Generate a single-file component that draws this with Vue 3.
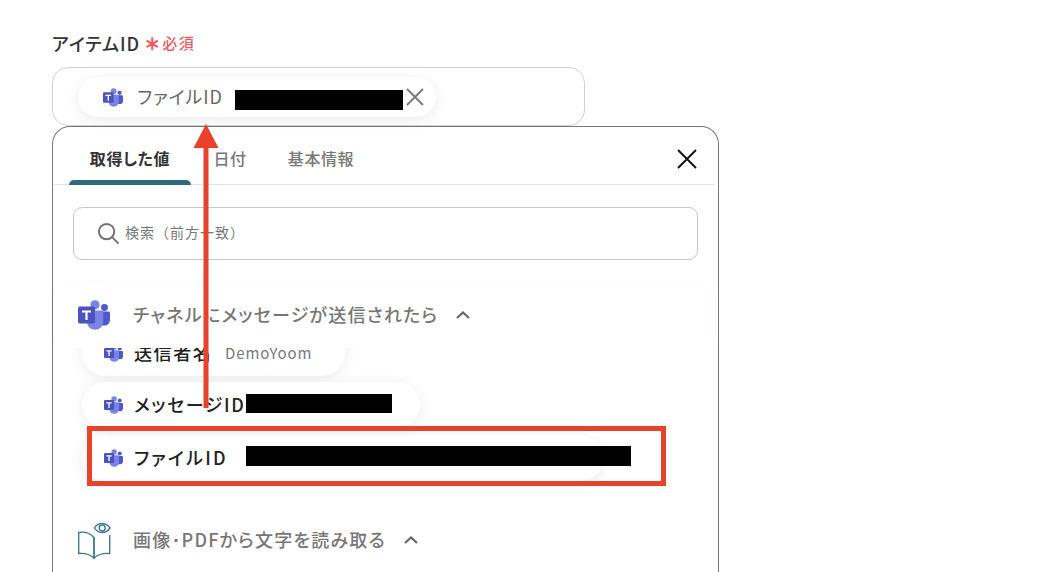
<script setup>
const tabs = [
  { label: '取得した値', active: true },
  { label: '日付', active: false },
  { label: '基本情報', active: false },
]
</script>

<template>
  <div class="page">
    <div class="label">
      <span>アイテムID</span>
      <span class="star">＊</span>
      <span class="req">必須</span>
    </div>

    <div class="field">
      <div class="chip chip-field">
        <svg class="teams teams-field" viewBox="0 0 32 30"><use href="#teams-logo" /></svg>
        <span class="chip-field-text">ファイルID</span>
        <span class="redact redact-field"></span>
        <svg class="chip-x" viewBox="0 0 18 18"><path d="M1 1 17 17M17 1 1 17" /></svg>
      </div>
    </div>

    <div class="panel">
      <div class="tabs">
        <div v-for="t in tabs" :key="t.label" class="tab" :class="{ active: t.active }">{{ t.label }}</div>
        <svg class="close" viewBox="0 0 20 20"><path d="M1 1 19 19M19 1 1 19" /></svg>
      </div>

      <div class="search">
        <svg class="search-icon" viewBox="0 0 24 24"><circle cx="10" cy="10" r="8" /><path d="M16 16 22.500 22.500" /></svg>
        <span class="search-text">検索（前方一致）</span>
      </div>

      <div class="section first">
        <svg class="teams teams-big" viewBox="0 0 32 30">
          <defs>
            <g id="teams-logo">
              <circle cx="26.500" cy="7.500" r="3.400" fill="#5059c9" />
              <path d="M21 11.500h9.500a1.500 1.500 0 0 1 1.500 1.500v7a5.500 5.500 0 0 1-5.500 5.500H21z" fill="#5059c9" />
              <circle cx="17" cy="4.800" r="4.600" fill="#7b83eb" />
              <path d="M9 10.500h15a1.200 1.200 0 0 1 1.200 1.200v10a8 8 0 0 1-16.200 0z" fill="#7b83eb" />
              <rect x="0" y="6.500" width="17" height="17" rx="1.800" fill="#4b53bc" />
              <path d="M4 10.500h9v2h-3.400v7.500H7.400v-7.500H4z" fill="#fff" />
            </g>
          </defs>
          <use href="#teams-logo" />
        </svg>
        <span class="section-title">チャネルにメッセージが送信されたら</span>
        <svg class="chev" viewBox="0 0 16 10"><path d="M2 8 8 2.500 14 8" /></svg>
      </div>

      <div class="list">
        <div class="chip row row-sender">
          <svg class="teams teams-small" viewBox="0 0 32 30"><use href="#teams-logo" /></svg>
          <span class="row-name">送信者名</span>
          <span class="row-value">DemoYoom</span>
        </div>
        <div class="chip row row-message">
          <svg class="teams teams-small" viewBox="0 0 32 30"><use href="#teams-logo" /></svg>
          <span class="row-name">メッセージID</span>
          <span class="redact redact-message"></span>
        </div>
        <div class="chip row row-file">
          <svg class="teams teams-small" viewBox="0 0 32 30"><use href="#teams-logo" /></svg>
          <span class="row-name">ファイルID</span>
          <span class="redact redact-file"></span>
        </div>
      </div>

      <div class="section second">
        <svg class="book" viewBox="0 0 33 38">
          <path d="M.7 11.500C6 10.500 12 12 16 16.500V37C12 33.500 6 32 .7 32.500Z" />
          <path d="M16 16.500V37C20 33.500 26 32 31.700 32.500V14" />
          <path d="M16.500 7C20 1 28 1 32 7 28 13 20 13 16.500 7Z" />
          <circle cx="24.200" cy="7" r="3" />
        </svg>
        <span class="section-title">画像･PDFから文字を読み取る</span>
        <svg class="chev" viewBox="0 0 16 10"><path d="M2 8 8 2.500 14 8" /></svg>
      </div>
    </div>

    <svg class="arrow" viewBox="0 0 26 285">
      <path d="M13 0 25.500 24H.5Z" />
      <rect x="10.500" y="23" width="5" height="261" />
    </svg>
    <div class="highlight"></div>
  </div>
</template>

<style scoped>
.page {
  position: relative;
  width: 1040px;
  height: 572px;
  overflow: hidden;
  box-sizing: border-box;
  padding: 31px 0 0 52px;
  background: #fff;
  font-family: "Noto Sans CJK JP", "Noto Sans", sans-serif;
  font-feature-settings: "palt";
  color: #333;
}
.label {
  display: flex;
  align-items: center;
  height: 24px;
  font-size: 18px;
  letter-spacing: 1px;
  font-weight: 500;
  color: #333;
}
.star {
  width: 16px;
  margin: -1px 0 0 4px;
  font-size: 16px;
  font-weight: 700;
  line-height: 24px;
  color: #ee5a62;
  letter-spacing: 0;
  font-feature-settings: normal;
  -webkit-text-stroke: 0.6px #ee5a62;
}
.req {
  margin: -2px 0 0 2px;
  font-size: 15px;
  letter-spacing: 1.500px;
  font-weight: 500;
  color: #ee5a62;
}
.field {
  box-sizing: border-box;
  width: 533px;
  height: 59px;
  margin-top: 12px;
  padding: 9px 0 0 25px;
  border: 1px solid #d0d2d6;
  border-radius: 16px;
}
.chip {
  display: flex;
  align-items: center;
  box-sizing: border-box;
  background: #fff;
  border-radius: 23px;
  box-shadow: 0 3px 14px rgba(0, 0, 0, 0.08);
}
.chip-field {
  width: 358px;
  height: 40px;
  padding-left: 25px;
  border-radius: 20px;
}
.teams {
  display: block;
  flex: none;
}
.teams-field {
  width: 20px;
  height: 19px;
}
.chip-field-text {
  flex: none;
  width: 85px;
  margin: -2px 0 0 14px;
  font-size: 18px;
  letter-spacing: 1px;
  color: #666;
  white-space: nowrap;
}
.redact {
  display: block;
  flex: none;
  height: 20px;
  background: #000;
}
.redact-field {
  width: 168px;
  margin: 6px 0 0 13px;
}
.chip-x {
  width: 18px;
  height: 18px;
  margin-left: 3px;
  fill: none;
  stroke: #777;
  stroke-width: 1.800;
}
.panel {
  box-sizing: border-box;
  width: 667px;
  height: 461px;
  padding: 0 0 0 1px;
  border: 1px solid #777;
  border-bottom: 0;
  border-radius: 18px 18px 0 0;
}
.tabs {
  position: relative;
  display: flex;
  box-sizing: border-box;
  width: 661px;
  height: 58px;
  padding-left: 15px;
  border-bottom: 1px solid #e3e5e8;
}
.tab {
  position: relative;
  box-sizing: border-box;
  width: 100px;
  height: 58px;
  padding-top: 20px;
  text-align: center;
  font-size: 16px;
  line-height: 22px;
  letter-spacing: 0.6px;
  color: #777;
  font-weight: 500;
}
.tab:nth-child(2) {
  width: 66px;
  margin-left: 6px;
}
.tab:nth-child(3) {
  width: 110px;
  margin-left: 3px;
}
.tab.active {
  width: 122px;
  color: #333;
  font-weight: 700;
}
.tab.active::after {
  content: "";
  position: absolute;
  left: 0;
  right: 0;
  bottom: 0;
  height: 5px;
  background: #2f6a80;
  border-radius: 5px 5px 0 0;
}
.close {
  position: absolute;
  right: 18px;
  top: 22px;
  width: 20px;
  height: 20px;
  fill: none;
  stroke: #111;
  stroke-width: 1.900;
}
.search {
  display: flex;
  align-items: center;
  box-sizing: border-box;
  width: 625px;
  height: 53px;
  margin: 22px 0 0 19px;
  padding-left: 23px;
  border: 1px solid #c6c8cc;
  border-radius: 9px;
  color: #777;
}
.search-text {
  margin-top: -3px;
  font-size: 14px;
  letter-spacing: 1px;
  font-feature-settings: normal;
}
.search-icon {
  width: 23px;
  height: 23px;
  margin-right: 5px;
  fill: none;
  stroke: #707070;
  stroke-width: 2;
}
.section {
  position: relative;
  z-index: 1;
  display: flex;
  align-items: center;
  box-sizing: border-box;
  width: 656px;
  height: 66px;
  padding-left: 24px;
  background: #fff;
}
.first {
  margin-top: 22px;
  box-shadow: 0 0 14px rgba(0, 0, 0, 0.012);
}
.second {
  margin-top: 26px;
}
.teams-big {
  width: 32px;
  height: 30px;
}
.book {
  width: 33px;
  height: 38px;
  fill: none;
  stroke: #3f7a92;
  stroke-width: 1.400;
}
.section-title {
  margin: -2px 0 0 23px;
  font-size: 18px;
  font-weight: 500;
  letter-spacing: 1.200px;
  color: #777;
  white-space: nowrap;
}
.second .section-title {
  margin-left: 22px;
}
.chev {
  width: 16px;
  height: 10px;
  margin-left: 17px;
  fill: none;
  stroke: #666;
  stroke-width: 2.200;
}
.list {
  display: flex;
  flex-direction: column;
  gap: 6px;
  margin: -18px 0 0 28px;
}
.row {
  height: 46px;
  padding-left: 22px;
}
.row-sender {
  width: 263px;
}
.row-message {
  width: 338px;
}
.row-file {
  width: 521px;
  margin-top: 1px;
}
.teams-small {
  width: 19px;
  height: 18px;
}
.row-name {
  flex: none;
  width: 112px;
  margin: -2px 0 0 11px;
  font-size: 18px;
  letter-spacing: 1.600px;
  font-weight: 500;
  color: #222;
  white-space: nowrap;
}
.row-sender .row-name {
  width: 91px;
}
.row-file .row-name {
  letter-spacing: 2.200px;
}
.row-value {
  margin-top: -2px;
  font-size: 15px;
  letter-spacing: 0.9px;
  color: #777;
}
.redact-message {
  width: 146px;
  height: 19px;
  margin-top: -3px;
}
.redact-file {
  width: 385px;
  margin-top: -4px;
}
.arrow {
  position: absolute;
  z-index: 2;
  left: 192.500px;
  top: 124px;
  width: 26px;
  height: 285px;
  fill: #e8432a;
}
.highlight {
  position: absolute;
  z-index: 2;
  left: 87px;
  top: 426px;
  width: 579px;
  height: 60px;
  box-sizing: border-box;
  border: 5px solid #e8432a;
}
</style>

<style>
html,
body {
  margin: 0;
  overflow: hidden;
  background: #fff;
}
</style>
